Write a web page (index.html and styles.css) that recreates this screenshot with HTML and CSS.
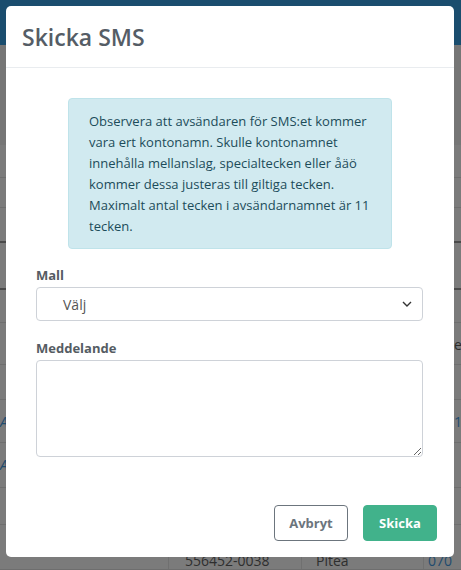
FILE: index.html
```html
<!DOCTYPE html>
<html lang="sv">
<head>
    <meta charset="UTF-8">
    <title>Skicka SMS</title>
    <link rel="stylesheet" href="styles.css">
</head>
<body>
    <div class="page">
        <div class="topbar"></div>
        <div class="band"></div>
        <div class="rows">
            <div class="row" style="height: 33px"></div>
            <div class="row" style="height: 30px"></div>
            <div class="row dark" style="height: 35px"></div>
            <div class="row dark" style="height: 47px"></div>
            <div class="row" style="height: 33px"></div>
            <div class="row" style="height: 42px"><span class="cell-right">e</span></div>
            <div class="row" style="height: 35px"></div>
            <div class="row" style="height: 43px"><span class="cell-left link">A</span><span class="cell-right link">11</span></div>
            <div class="row" style="height: 45px"><span class="cell-left link">A</span></div>
            <div class="row" style="height: 37px"></div>
            <div class="row last">
                <span class="c1">556452-0038</span>
                <span class="c2">Piteå</span>
                <span class="c3 link">070</span>
            </div>
        </div>
    </div>

    <div class="modal">
        <div class="modal-header">
            <h2 class="modal-title">Skicka SMS</h2>
        </div>
        <div class="modal-body">
            <div class="alert">
                Observera att avsändaren för SMS:et kommer vara ert kontonamn. Skulle kontonamnet innehålla mellanslag, specialtecken eller åäö kommer dessa justeras till giltiga tecken. Maximalt antal tecken i avsändarnamnet är 11 tecken.
            </div>
            <label class="label">Mall</label>
            <div class="select">
                <span>Välj</span>
                <svg width="10" height="6" viewBox="0 0 10 6"><path d="M1 1l4 4 4-4" fill="none" stroke="#333" stroke-width="1.4"/></svg>
            </div>
            <label class="label">Meddelande</label>
            <textarea class="textarea"></textarea>
        </div>
        <div class="modal-footer">
            <button class="btn btn-outline">Avbryt</button>
            <button class="btn btn-green">Skicka</button>
        </div>
    </div>
</body>
</html>
```
FILE: styles.css
```css
body {
    margin: 0;
    padding: 0;
    font-family: "Open Sans", "Liberation Sans", sans-serif;
    background-color: #7b7b7b;
}

.page {
    height: 570px;
    overflow: hidden;
}

.topbar {
    height: 45px;
    background-color: #1a4d6e;
}

.band {
    height: 100px;
    background-color: #767676;
}

.row {
    position: relative;
    border-bottom: 1px solid #6e6e6e;
    box-sizing: border-box;
}

.row.dark {
    border-bottom: 2px solid #4a4a4a;
}

.cell-right {
    position: absolute;
    left: 454px;
    top: 12px;
    font-size: 14px;
    color: #2c2c2c;
}

.cell-left {
    position: absolute;
    left: 0;
    top: 12px;
    font-size: 14px;
    font-style: italic;
}

.link {
    color: #1f4b6e;
}

.row.last {
    height: 45px;
    display: flex;
    font-size: 14px;
    color: #2e2e2e;
}

.c1 {
    margin-left: 168px;
    border-left: 1px solid #707070;
    border-right: 1px solid #707070;
    padding: 26px 0 0 16px;
    box-sizing: border-box;
    width: 134px;
}

.c2 {
    width: 122px;
    border-right: 1px solid #707070;
    padding: 26px 0 0 14px;
    box-sizing: border-box;
}

.c3 {
    padding: 26px 0 0 4px;
}

.modal {
    position: absolute;
    top: 6px;
    left: 6px;
    width: 448px;
    height: 551px;
    background-color: white;
    border-radius: 5px;
    display: flex;
    flex-direction: column;
}

.modal-header {
    height: 61px;
    border-bottom: 1px solid #e9ecef;
    padding: 0 16px;
    display: flex;
    align-items: center;
}

.modal-title {
    margin: 0;
    font-size: 23px;
    font-weight: 600;
    color: #555d66;
}

.modal-body {
    padding: 30px 31px 0 30px;
    flex: 1;
}

.alert {
    margin: 0 31px 0 32px;
    background-color: #d1eaf0;
    border: 1px solid #bfe3ea;
    border-radius: 4px;
    padding: 12px 20px 11px 20px;
    font-size: 13px;
    line-height: 21px;
    color: #1c4c5a;
}

.label {
    display: block;
    margin-top: 17px;
    margin-bottom: 3px;
    font-size: 13px;
    font-weight: 700;
    color: #555c63;
}

.select {
    height: 34px;
    border: 1px solid #ced2d8;
    border-radius: 4px;
    box-sizing: border-box;
    display: flex;
    align-items: center;
    justify-content: space-between;
    padding: 0 10px 0 26px;
    font-size: 14px;
    color: #555;
}

.select + .label {
    margin-top: 18px;
}

.textarea {
    display: block;
    width: 100%;
    height: 97px;
    box-sizing: border-box;
    border: 1px solid #ced2d8;
    border-radius: 4px;
    margin: 0;
}

.modal-footer {
    display: flex;
    justify-content: flex-end;
    gap: 15px;
    padding: 0 17px 16px 0;
}

.btn {
    height: 36px;
    width: 74px;
    border-radius: 4px;
    font-family: "Open Sans", "Liberation Sans", sans-serif;
    font-size: 13px;
    font-weight: 700;
}

.btn-outline {
    background-color: white;
    border: 1px solid #6c757d;
    color: #6c757d;
}

.btn-green {
    background-color: #41b28b;
    border: 1px solid #41b28b;
    color: white;
}
```
